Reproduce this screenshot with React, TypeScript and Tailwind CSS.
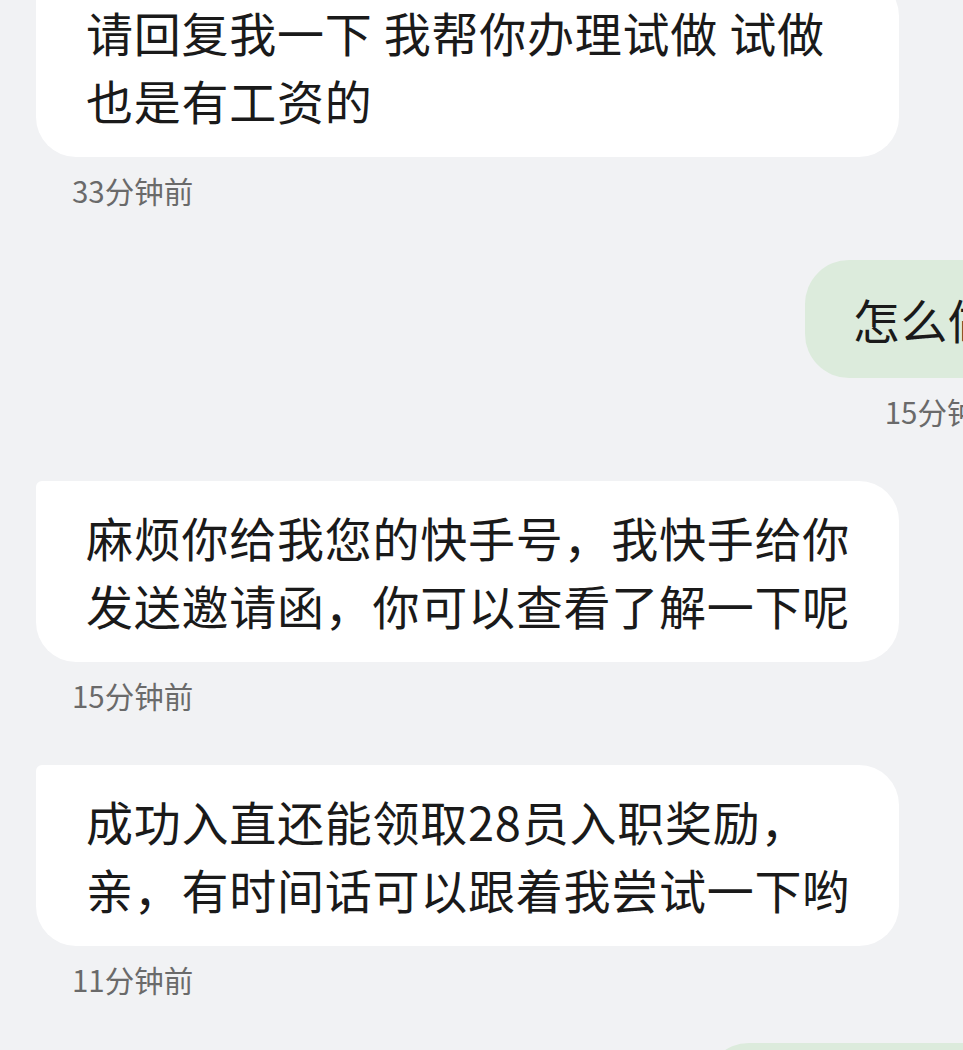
import React from 'react';

type Msg = {
  side: 'left' | 'right';
  lines: string[];
  time: string;
};

const messages: Msg[] = [
  { side: 'left', lines: ['请回复我一下 我帮你办理试做 试做', '也是有工资的'], time: '33分钟前' },
  { side: 'right', lines: ['怎么做'], time: '15分钟前' },
  { side: 'left', lines: ['麻烦你给我您的快手号，我快手给你', '发送邀请函，你可以查看了解一下呢'], time: '15分钟前' },
  { side: 'left', lines: ['成功入直还能领取28员入职奖励，', '亲，有时间话可以跟着我尝试一下哟'], time: '11分钟前' },
];

function Bubble({ msg }: { msg: Msg }) {
  const left = msg.side === 'left';
  return (
    <div className={`flex flex-col mb-[52px] ${left ? 'items-start' : 'items-end'}`}>
      <div
        className={
          left
            ? 'w-[863px] bg-white rounded-[40px] rounded-tl-[6px] pl-[50px] pr-[40px] pt-[22px] pb-[23px]'
            : 'bg-[#dcebdc] rounded-[44px] rounded-tr-[6px] px-[48px] py-[25px]'
        }
      >
        {msg.lines.map((l, i) => (
          <div key={i} className="text-[47px] leading-[68px] tracking-[0.75px] text-[#1a1a1a] whitespace-nowrap">
            {l}
          </div>
        ))}
      </div>
      <div
        className={`mt-[15px] text-[29.5px] leading-[36px] text-[#6a6a6a] ${left ? 'pl-[36px]' : 'pr-[38px]'}`}
      >
        {msg.time}
      </div>
    </div>
  );
}

export default function App() {
  return (
    <div className="w-[963px] h-[1050px] overflow-hidden bg-[#f1f2f4] font-['Noto_Sans_CJK_SC',sans-serif]">
      <div className="w-[1080px] px-[36px] mt-[-24px] flex flex-col">
        {messages.map((m, i) => (
          <Bubble key={i} msg={m} />
        ))}
        <div className="flex justify-end mt-[-6px]">
          <div className="w-[339px] bg-[#dcebdc] rounded-[44px] rounded-tr-[6px] px-[48px] py-[25px]">
            <div className="text-[47px] leading-[68px] tracking-[0.75px] text-[#1a1a1a] whitespace-nowrap">好的谢谢</div>
          </div>
        </div>
      </div>
    </div>
  );
}
